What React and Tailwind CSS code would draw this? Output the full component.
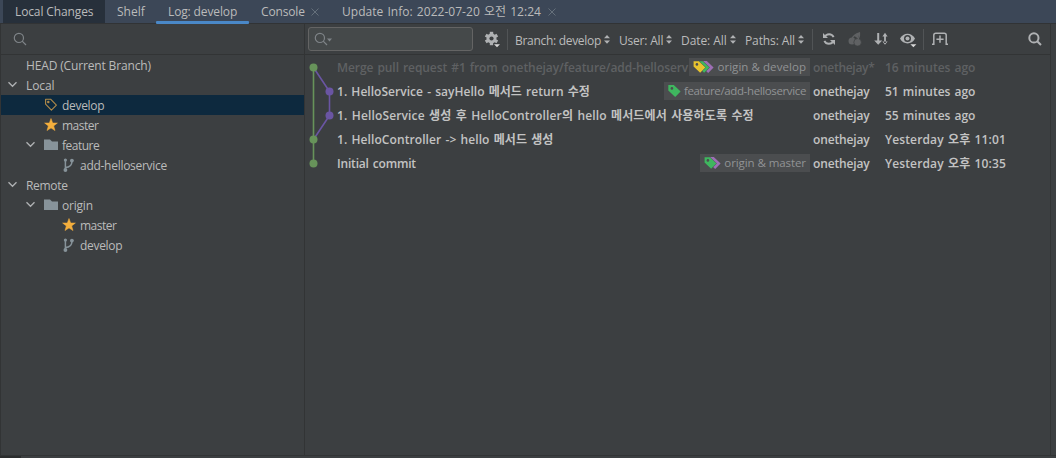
import clsx from "clsx";

const branches = [
  { name: "HEAD (Current Branch)", indent: "pl-[25px]", tracking: "tracking-[-0.15px]" },
  { name: "Local", indent: "pl-[3px]", open: true, tracking: "tracking-[-0.1px]" },
  { name: "develop", indent: "pl-[43px]", icon: "tag", tracking: "tracking-[-0.3px]", selected: true },
  { name: "master", indent: "pl-[43px]", icon: "star", tracking: "tracking-[-0.5px]" },
  { name: "feature", indent: "pl-[21px]", open: true, icon: "folder", tracking: "tracking-[-0.5px]" },
  { name: "add-helloservice", indent: "pl-[61px]", icon: "branch", tracking: "tracking-[-0.28px]" },
  { name: "Remote", indent: "pl-[3px]", open: true, tracking: "tracking-[-0.3px]" },
  { name: "origin", indent: "pl-[21px]", open: true, icon: "folder", tracking: "tracking-[-0.2px]" },
  { name: "master", indent: "pl-[61px]", icon: "star", tracking: "tracking-[-0.5px]" },
  { name: "develop", indent: "pl-[61px]", icon: "branch", tracking: "tracking-[-0.3px]" },
];

const commits = [
  {
    subject: "Merge pull request #1 from onethejay/feature/add-helloserv",
    tracking: "tracking-[-0.07px]",
    label: "origin & develop",
    labelTracking: "tracking-[0.06px]",
    tags: ["#e8c32e", "#3fb65f", "#9d6fb5"],
    author: "onethejay*",
    authorTracking: "tracking-[-0.3px]",
    date: "16 minutes ago",
    dateTracking: "tracking-[0px]",
    merged: true,
  },
  {
    subject: "1. HelloService - sayHello 메서드 return 수정",
    tracking: "tracking-[0.03px]",
    label: "feature/add-helloservice",
    labelTracking: "tracking-[-0.37px]",
    tags: ["#3fb65f"],
    author: "onethejay",
    authorTracking: "tracking-[-0.15px]",
    date: "51 minutes ago",
    dateTracking: "tracking-[0px]",
  },
  {
    subject: "1. HelloService 생성 후 HelloController의 hello 메서드에서 사용하도록 수정",
    tracking: "tracking-[0.15px]",
    author: "onethejay",
    authorTracking: "tracking-[-0.15px]",
    date: "55 minutes ago",
    dateTracking: "tracking-[0px]",
  },
  {
    subject: "1. HelloController -> hello 메서드 생성",
    tracking: "tracking-[0.08px]",
    author: "onethejay",
    authorTracking: "tracking-[-0.15px]",
    date: "Yesterday 오후 11:01",
    dateTracking: "tracking-[0.13px]",
  },
  {
    subject: "Initial commit",
    tracking: "tracking-[-0.18px]",
    label: "origin & master",
    labelTracking: "tracking-[-0.08px]",
    tags: ["#3fb65f", "#9d6fb5"],
    author: "onethejay",
    authorTracking: "tracking-[-0.15px]",
    date: "Yesterday 오후 10:35",
    dateTracking: "tracking-[0.13px]",
  },
];

function SearchIcon({ className, bold }) {
  return (
    <svg className={className} width="14" height="14" viewBox="0 0 14 14" fill="none" stroke="currentColor" strokeWidth={bold ? 2 : 1.2}>
      <circle cx="5.9" cy="5.9" r="4.6" />
      <path d="M9.2 9.2L13 13" />
    </svg>
  );
}

function CloseIcon({ className }) {
  return (
    <svg className={clsx("shrink-0 text-[#65707b]", className)} width="8" height="8" viewBox="0 0 8 8" fill="none" stroke="currentColor">
      <path d="M0.5 0.5L7.5 7.5M7.5 0.5L0.5 7.5" />
    </svg>
  );
}

function Chevron() {
  return (
    <svg className="shrink-0 w-[22px]" width="22" height="16" viewBox="0 0 22 16" fill="none" stroke="#afb1b3" strokeWidth="1.3">
      <path d="M4.5 5.2L8.5 9.3L12.5 5.2" />
    </svg>
  );
}

function TreeIcon({ type }) {
  return (
    <svg className="shrink-0 mr-[2px]" width="16" height="16" viewBox="0 0 16 16">
      {type === "tag" && (
        <g fill="none" stroke="#b08a4a" strokeWidth="1.1">
          <path d="M1.6 2.2H6.6L12.4 8.2L7.4 13.2L1.6 7.2Z" strokeLinejoin="round" />
          <circle cx="4.3" cy="4.9" r="0.7" />
        </g>
      )}
      {type === "star" && (
        <path d="M7 1.5L8.7 6H13.4L9.7 8.9L11 13.6L7 10.9L3 13.6L4.3 8.9L0.6 6H5.3Z" fill="#f4af3d" stroke="#f4af3d" strokeWidth="0.5" />
      )}
      {type === "folder" && <path d="M0 2.5H6L8 4.5H14V13H0Z" fill="#87939a" />}
      {type === "branch" && (
        <g fill="none" stroke="#87939a" strokeWidth="1.5">
          <path d="M3.4 4V12M3.4 10.6C6.5 10.4 9.9 8.8 9.9 4.6" />
          <circle cx="3.4" cy="3" r="1.6" fill="#87939a" stroke="none" />
          <circle cx="9.9" cy="3.6" r="1.9" fill="#87939a" stroke="none" />
          <circle cx="3.4" cy="13" r="1.9" fill="#87939a" stroke="none" />
        </g>
      )}
    </svg>
  );
}

function TagIcons({ colors }) {
  // back tags are painted first so the leading one stays on top
  return (
    <svg className="shrink-0" width={13 + (colors.length - 1) * 4} height="14" viewBox={`0 0 ${13 + (colors.length - 1) * 4} 14`}>
      {colors
        .map((color, i) => (
          <g key={color} transform={`translate(${i * 4} 0)`}>
            <path d="M0.3 1H5.8L12.6 7.4L7.2 13L0.3 6.6Z" fill={color} stroke="#4b4d4f" strokeWidth={i < colors.length - 1 ? 0.5 : 0} />
            {i === 0 && <circle cx="3.9" cy="4.4" r="1.3" fill="#4b4d4f" />}
          </g>
        ))
        .reverse()}
    </svg>
  );
}

function Filter({ children, width }) {
  return (
    <button className={clsx("flex shrink-0 items-center justify-between whitespace-nowrap", width)}>
      <span className="pt-[3px]">{children}</span>
      <svg width="6" height="9" viewBox="0 0 6 9" fill="#afb1b3">
        <path d="M0 3.2L3 0L6 3.2ZM0 5.6L3 8.8L6 5.6Z" />
      </svg>
    </button>
  );
}

function Divider({ className }) {
  return <div className={clsx("w-px h-[21px] shrink-0 bg-[#515456]", className)} />;
}

function Tabs() {
  return (
    <div className="flex h-[24px] shrink-0 border-b border-[#313335] bg-[#3c4757] pl-[3px] whitespace-nowrap">
      <div className="flex w-[102px] items-center bg-[#27303b] pl-3 tracking-[-0.12px]">Local Changes</div>
      <div className="flex w-[51px] items-center pl-3">Shelf</div>
      <div className="relative flex w-[93px] items-center pl-3 tracking-[-0.13px]">
        Log: develop
        <div className="absolute inset-x-0 -bottom-px h-[3px] rounded-[1px] bg-[#4a88c7]" />
      </div>
      <div className="flex w-[81px] items-center pl-3">
        <span className="w-[50px] tracking-[-0.15px]">Console</span>
        <CloseIcon />
      </div>
      <div className="flex items-center pl-3">
        <span className="w-[206px] tracking-[0.03px] [word-spacing:1px]">Update Info: 2022-07-20 오전 12:24</span>
        <CloseIcon />
      </div>
    </div>
  );
}

function Sidebar() {
  return (
    <aside className="flex w-[304px] shrink-0 flex-col border-r border-[#323435]">
      <div className="flex h-[31px] shrink-0 items-center border-b border-[#323435] pl-[12px] text-[#7f8488]">
        <SearchIcon />
      </div>
      {branches.map((b, i) => (
        <div key={i} className={clsx("flex h-5 items-center whitespace-nowrap", b.indent, b.selected && "bg-[#0d293e]")}>
          {b.open && <Chevron />}
          {b.icon && <TreeIcon type={b.icon} />}
          <span className={clsx("pt-[2px]", b.tracking)}>{b.name}</span>
        </div>
      ))}
    </aside>
  );
}

function Toolbar() {
  return (
    <div className="flex h-[31px] shrink-0 items-center border-b border-[#323435] pl-[3px] text-[#bbbbbb]">
      <div className="flex h-6 w-[165px] shrink-0 items-center rounded-[3px] border border-[#646464] bg-[#45494a] pl-[5px] text-[#7f8488]">
        <SearchIcon />
        <svg className="-ml-px mt-[2px]" width="5" height="4" viewBox="0 0 5 4" fill="currentColor">
          <path d="M0 0.5H5L2.5 3.5Z" />
        </svg>
      </div>
      <svg className="ml-[11px] shrink-0" width="17" height="17" viewBox="0 0 17 17">
        <g transform="translate(7.5 7.5)" fill="#afb1b3">
          <circle r="5" />
          <rect x="-1.7" y="-6.7" width="3.4" height="13.4" />
          <rect x="-1.7" y="-6.7" width="3.4" height="13.4" transform="rotate(60)" />
          <rect x="-1.7" y="-6.7" width="3.4" height="13.4" transform="rotate(120)" />
          <circle r="2.1" fill="#3c3f41" />
        </g>
        <path d="M9.5 12.4H17V17H9.5Z" fill="#3c3f41" />
        <path d="M10 13.2H16L13 16.2Z" fill="#d8d8d8" />
      </svg>
      <Divider className="ml-[6px]" />
      <div className="ml-[7px] flex shrink-0 gap-[9px]">
        <Filter width="w-[95px] tracking-[-0.3px]">Branch: develop</Filter>
        <Filter width="w-[53px] tracking-[-0.2px]">User: All</Filter>
        <Filter width="w-[55px] tracking-[-0.08px]">Date: All</Filter>
        <Filter width="w-[59px] tracking-[-0.12px]">Paths: All</Filter>
      </div>
      <Divider className="ml-[8px]" />
      {/* refresh */}
      <svg className="ml-[9px] shrink-0" width="14" height="14" viewBox="0 0 14 14" fill="none" stroke="#afb1b3" strokeWidth="1.9">
        <path d="M2.6 5.2A4.9 4.9 0 0 1 11.6 5.2M11.4 8.8A4.9 4.9 0 0 1 2.4 8.8" />
        <path d="M1 1V6H6ZM13 13V8H8Z" fill="#afb1b3" stroke="none" />
      </svg>
      {/* cherry-pick */}
      <svg className="ml-[12px] shrink-0" width="14" height="14" viewBox="0 0 14 14" fill="#5f6163">
        <circle cx="4" cy="9" r="3.5" />
        <circle cx="9.6" cy="10.3" r="3.8" stroke="#3c3f41" strokeWidth="0.7" />
        <path d="M4 7C5 4 7.5 1.8 11.5 0.8C12 3 11.2 5.2 10 7.5" fill="none" stroke="#5f6163" strokeWidth="1.3" />
        <path d="M11.9 0.3L6 3.8L10 6.5Z" />
      </svg>
      {/* sort */}
      <svg className="ml-[12px] shrink-0" width="14" height="14" viewBox="0 0 14 14" fill="#afb1b3">
        <path d="M3.2 1H5.2V8.4H8.2L4.2 12.8L0.2 8.4H3.2Z" />
        <path d="M10.1 3H11.9V11H10.1ZM8.4 4.4L11 0.8L13.6 4.4ZM8.4 9.4L11 12.8L13.6 9.4Z" />
      </svg>
      {/* visibility */}
      <svg className="ml-[12px] shrink-0" width="18" height="18" viewBox="0 0 18 18">
        <path d="M0 8.5C3.2 2 11.8 2 15 8.5C11.8 15 3.2 15 0 8.5Z" fill="#afb1b3" />
        <circle cx="7.5" cy="8.5" r="3.5" fill="#3c3f41" />
        <circle cx="7.5" cy="8.5" r="2" fill="#afb1b3" />
        <path d="M9.5 13.6H17V18H9.5Z" fill="#3c3f41" />
        <path d="M10.4 14.2H16.4L13.4 17.2Z" fill="#d8d8d8" />
      </svg>
      <Divider className="ml-[5px]" />
      <svg className="ml-[8px] shrink-0" width="16" height="14" viewBox="0 0 16 14" fill="none" stroke="#afb1b3" strokeWidth="1.5">
        <path d="M0 12.3H1.8V3.2Q1.8 1.2 3.8 1.2H12.2Q14.2 1.2 14.2 3.2V12.3H16" />
        <path d="M8 3.6V10.8M4.4 7.2H11.6" />
      </svg>
      <SearchIcon bold className="ml-auto mr-[8px] text-[#afb1b3]" />
    </div>
  );
}

function Graph() {
  return (
    <svg className="w-8 shrink-0" width="32" height="120" viewBox="0 0 32 120">
      <path d="M8.5 12.5L24.5 36.5V60.5L8.5 84.5" fill="none" stroke="#6a55a3" strokeWidth="1.6" />
      <path d="M8.5 12.5V108.5" stroke="#67935a" strokeWidth="1.6" />
      {[12.5, 84.5, 108.5].map((y) => (
        <circle key={y} cx="8.5" cy={y} r="4" fill="#67935a" />
      ))}
      {[36.5, 60.5].map((y) => (
        <circle key={y} cx="24.5" cy={y} r="4" fill="#6a55a3" />
      ))}
    </svg>
  );
}

function CommitRow({ commit }) {
  return (
    <div className={clsx("flex h-6 items-center font-semibold whitespace-nowrap [word-spacing:1px]", commit.merged ? "text-[#5f6163]" : "text-[#c3c3c3]")}>
      <div className="flex w-[473px] items-center">
        <span className={clsx("min-w-0 flex-1 pt-[2px]", commit.tracking)}>{commit.subject}</span>
        {commit.label && (
          <span className="flex h-[18px] shrink-0 items-center gap-[3px] bg-[#4b4d4f] px-1 text-[11.5px] font-normal text-[#919395] [word-spacing:0px]">
            <TagIcons colors={commit.tags} />
            <span className={commit.labelTracking}>{commit.label}</span>
          </span>
        )}
      </div>
      <span className={clsx("ml-[3px] w-[72px] shrink-0 pt-[2px]", commit.authorTracking)}>{commit.author}</span>
      <span className={clsx("pt-[2px]", commit.dateTracking)}>{commit.date}</span>
    </div>
  );
}

function App() {
  return (
    <div className="flex h-[458px] w-[1056px] flex-col overflow-hidden bg-[#3c3f41] font-['Open_Sans','Noto_Sans_CJK_KR',sans-serif] text-[12px] leading-[18px] text-[#bbbbbb]">
      <Tabs />
      <div className="flex min-h-0 flex-1 border-b border-l border-[#323435]">
        <Sidebar />
        <section className="flex w-[746px] shrink-0 flex-col border-r border-[#323435]">
          <Toolbar />
          <div className="flex">
            <Graph />
            <div className="min-w-0 flex-1">
              {commits.map((commit, i) => (
                <CommitRow key={i} commit={commit} />
              ))}
            </div>
          </div>
        </section>
      </div>
      <div className="h-[2px] shrink-0">
        <div className="h-full w-[21px] bg-[#2b2d2e]" />
      </div>
    </div>
  );
}

export default App;
